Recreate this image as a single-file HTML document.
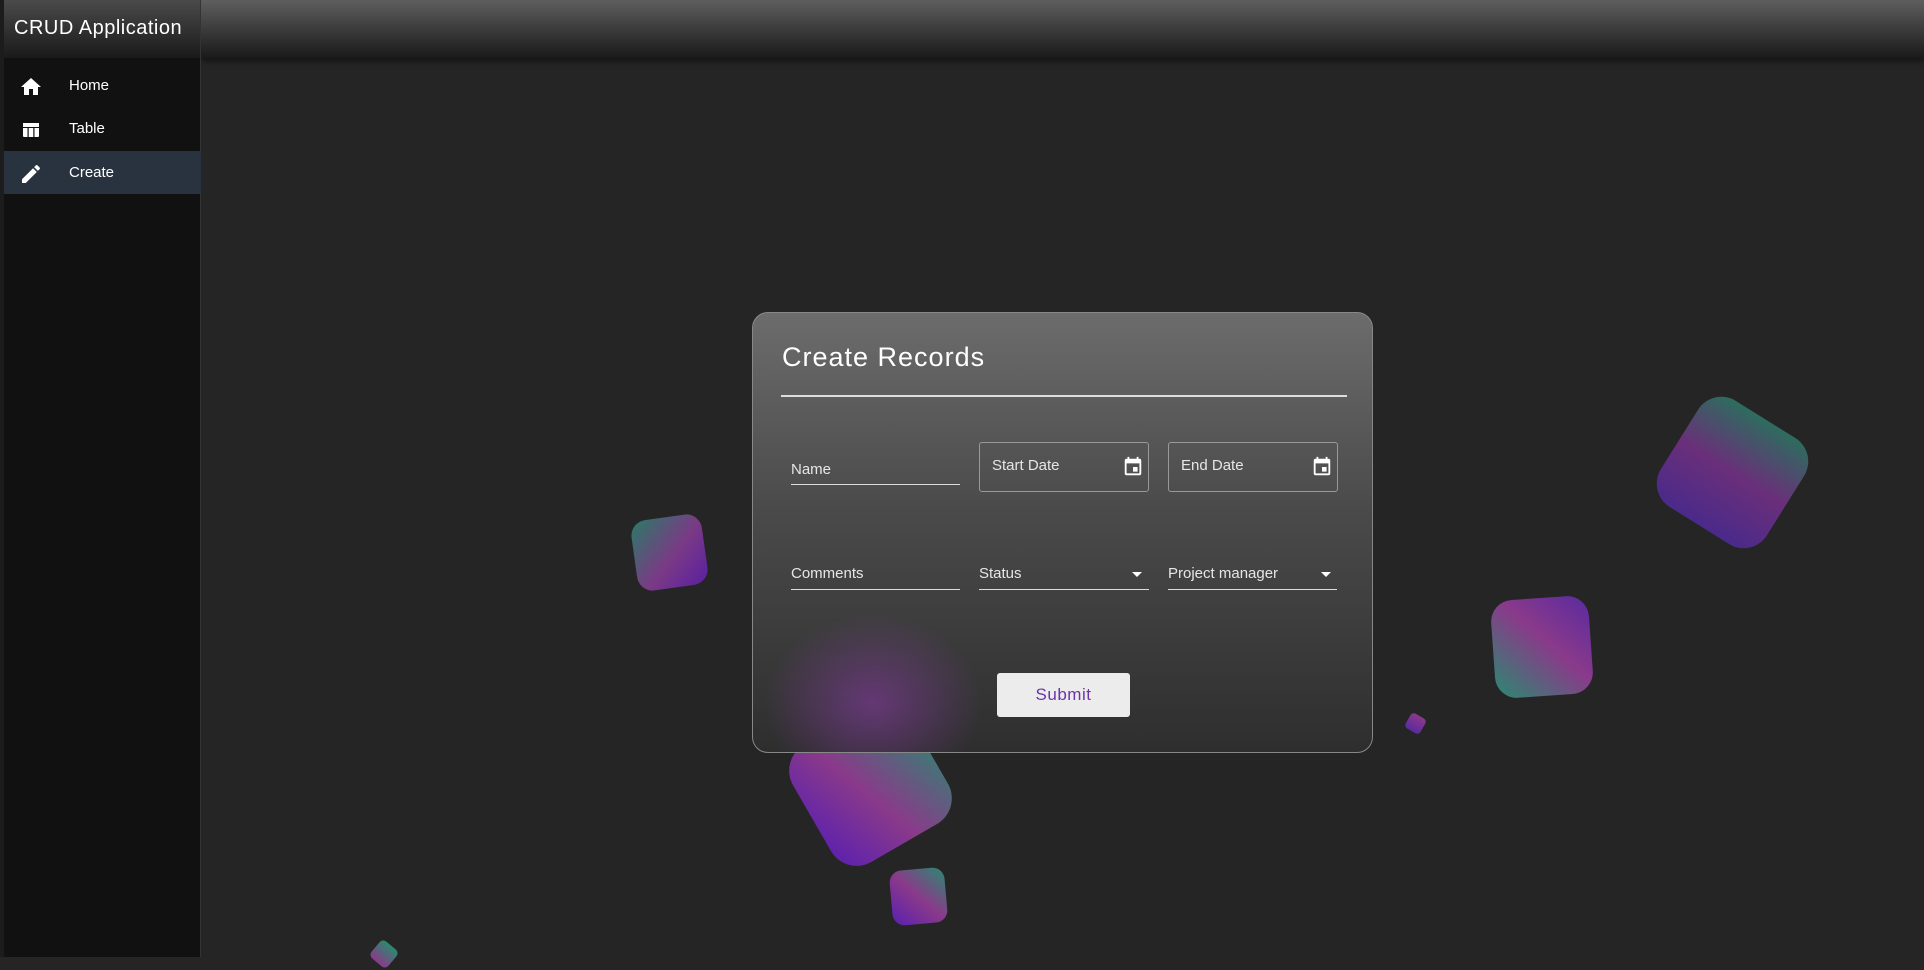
<!DOCTYPE html>
<html><head><meta charset="utf-8"><style>
*{margin:0;padding:0;box-sizing:border-box}
body{width:1924px;height:957px;background:#252525;overflow:hidden;position:relative;font-family:"Liberation Sans",sans-serif;color:#fff}
.top{position:absolute;left:201px;top:0;right:0;height:58px;background:linear-gradient(#5e5e5e,#2e2e2e 70%,#1a1a1a);box-shadow:0 3px 6px rgba(0,0,0,.5)}
.side{position:absolute;left:4px;top:0;width:197px;height:957px;background:#111;border-right:1px solid #333}
.strip{position:absolute;left:0;top:0;width:4px;height:957px;background:#1c1c1c}
.brand{height:58px;background:linear-gradient(#4a4a4a,#1a1a1a);font-size:20px;padding:17px 0 0 10px;letter-spacing:.5px}
.item{position:absolute;left:0;width:197px;height:43px;font-size:15px}
.item span{position:absolute;left:65px;top:13px}
.item svg{position:absolute;left:15px;top:11px}
.shape{position:absolute;border-radius:22%}
.card{position:absolute;left:752px;top:312px;width:621px;height:441px;border-radius:16px;border:1px solid #888;background:linear-gradient(#6c6c6c,#4a4a4a 45%,#2e2e2e);overflow:hidden}
.glow{position:absolute;left:10px;top:300px;width:220px;height:180px;border-radius:50%;background:radial-gradient(rgba(140,60,170,.55),rgba(140,60,170,0) 70%)}
.lbl{position:absolute;font-size:15px;color:#e6e6e6}
.ul{position:absolute;height:1px;background:#ddd}
.box{position:absolute;border:1px solid #999;border-radius:3px;height:50px;width:170px}
</style></head><body>
<div class="shape" style="left:1670px;top:410px;width:125px;height:125px;transform:rotate(32deg);background:linear-gradient(#2d6d5e,#6a2f7a 50%,#4a2a8a)"></div>
<div class="shape" style="left:634px;top:517px;width:71px;height:71px;transform:rotate(-8deg);background:linear-gradient(135deg,#2b7a66,#7a3a86 55%,#5a1fa0)"></div>
<div class="shape" style="left:1493px;top:598px;width:98px;height:98px;transform:rotate(-4deg);background:linear-gradient(225deg,#5a2aa0,#8a3a8a 45%,#2a8a70)"></div>
<div class="shape" style="left:803px;top:717px;width:135px;height:135px;transform:rotate(-30deg);background:linear-gradient(70deg,#5a1fb0,#8a3a8a 45%,#2a8a70)"></div>
<div class="shape" style="left:891px;top:869px;width:55px;height:55px;transform:rotate(-5deg);background:linear-gradient(45deg,#5a1fb0,#8a3a8a 50%,#2a8a70)"></div>
<div class="shape" style="left:1407px;top:715px;width:17px;height:17px;transform:rotate(30deg);background:linear-gradient(#8a3a8a,#5a2aa0)"></div>
<div class="shape" style="left:373px;top:943px;width:22px;height:22px;transform:rotate(40deg);background:linear-gradient(#2a8a70,#8a3a8a)"></div>
<div class="top"></div>
<div class="strip"></div>
<div class="side">
<div class="brand">CRUD Application</div>
<div class="item" style="top:64px"><svg width="24" height="24" viewBox="0 0 24 24"><path fill="#fff" d="M10 20v-6h4v6h5v-8h3L12 3 2 12h3v8z"/></svg><span>Home</span></div>
<div class="item" style="top:107px"><svg width="24" height="24" viewBox="0 0 24 24"><path fill="#fff" d="M4 5h16v4H4zM4 10h4.5v9H5a1 1 0 0 1-1-1zM9.7 10h4.6v9H9.7zM15.5 10H20v8a1 1 0 0 1-1 1h-3.5z"/></svg><span>Table</span></div>
<div class="item" style="top:151px;background:#29333f"><svg width="24" height="24" viewBox="0 0 24 24"><path fill="#fff" d="M3 17.25V21h3.75L17.81 9.94l-3.75-3.75zM20.71 7.04a1 1 0 0 0 0-1.41l-2.34-2.34a1 1 0 0 0-1.41 0l-1.83 1.83 3.75 3.75z"/></svg><span>Create</span></div>
</div>
<div class="card">
<div class="glow"></div>
<div style="position:absolute;left:29px;top:29px;font-size:27px;letter-spacing:1px">Create Records</div>
<div style="position:absolute;left:28px;top:82px;width:566px;height:2px;background:#ddd"></div>
<div class="lbl" style="left:38px;top:148px">Name</div><div class="ul" style="left:38px;top:171px;width:169px"></div>
<div class="box" style="left:226px;top:129px"></div><div class="lbl" style="left:239px;top:144px">Start Date</div>
<svg style="position:absolute;left:369px;top:143px" width="22" height="22" viewBox="0 0 24 24"><path fill="#fff" d="M17 12h-5v5h5zM16 1v2H8V1H6v2H5a2 2 0 0 0-2 2v14a2 2 0 0 0 2 2h14a2 2 0 0 0 2-2V5a2 2 0 0 0-2-2h-1V1zm3 18H5V8h14z"/></svg>
<div class="box" style="left:415px;top:129px"></div><div class="lbl" style="left:428px;top:144px">End Date</div>
<svg style="position:absolute;left:558px;top:143px" width="22" height="22" viewBox="0 0 24 24"><path fill="#fff" d="M17 12h-5v5h5zM16 1v2H8V1H6v2H5a2 2 0 0 0-2 2v14a2 2 0 0 0 2 2h14a2 2 0 0 0 2-2V5a2 2 0 0 0-2-2h-1V1zm3 18H5V8h14z"/></svg>
<div class="lbl" style="left:38px;top:252px">Comments</div><div class="ul" style="left:38px;top:276px;width:169px"></div>
<div class="lbl" style="left:226px;top:252px">Status</div><div class="ul" style="left:226px;top:276px;width:170px"></div>
<div style="position:absolute;left:379px;top:259px;border:5px solid transparent;border-top:5px solid #fff"></div>
<div class="lbl" style="left:415px;top:252px">Project manager</div><div class="ul" style="left:415px;top:276px;width:169px"></div>
<div style="position:absolute;left:568px;top:259px;border:5px solid transparent;border-top:5px solid #fff"></div>
<div style="position:absolute;left:244px;top:360px;width:133px;height:44px;background:#ececec;border-radius:3px;color:#6a35a8;font-size:17px;text-align:center;line-height:44px;letter-spacing:.5px">Submit</div>
</div>
</body></html>
